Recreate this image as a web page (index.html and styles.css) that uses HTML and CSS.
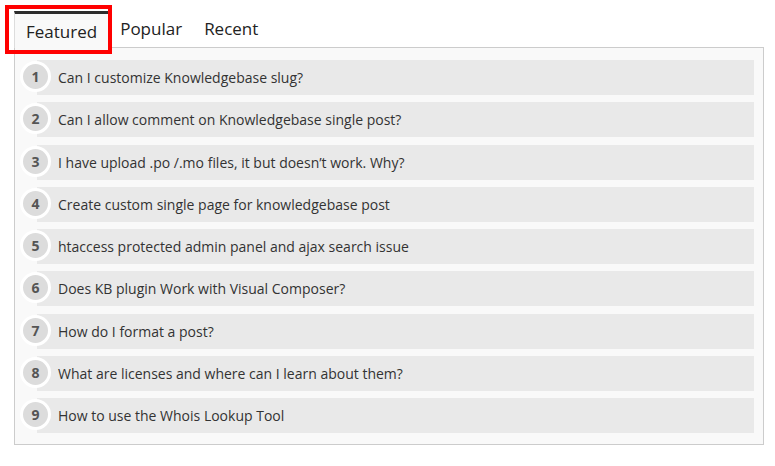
FILE: index.html
```html
<!DOCTYPE html>
<html>
<head>
<meta charset="utf-8">
<link rel="stylesheet" href="styles.css">
</head>
<body>
<div class="widget">
  <ul class="tabs">
    <li class="tab active">Featured</li>
    <li class="tab">Popular</li>
    <li class="tab">Recent</li>
  </ul>
  <div class="highlight"></div>
  <ol class="list">
    <li class="row"><span class="num">1</span>Can I customize Knowledgebase slug?</li>
    <li class="row"><span class="num">2</span>Can I allow comment on Knowledgebase single post?</li>
    <li class="row"><span class="num">3</span>I have upload .po /.mo files, it but doesn’t work. Why?</li>
    <li class="row"><span class="num">4</span>Create custom single page for knowledgebase post</li>
    <li class="row"><span class="num">5</span>htaccess protected admin panel and ajax search issue</li>
    <li class="row"><span class="num">6</span>Does KB plugin Work with Visual Composer?</li>
    <li class="row"><span class="num">7</span>How do I format a post?</li>
    <li class="row"><span class="num">8</span>What are licenses and where can I learn about them?</li>
    <li class="row"><span class="num">9</span>How to use the Whois Lookup Tool</li>
  </ol>
</div>
</body>
</html>
```
FILE: styles.css
```css
html, body {
  margin: 0;
  padding: 0;
  background: #fff;
}
body {
  font-family: "Open Sans", "Noto Sans", sans-serif;
  color: #333;
}
.widget {
  position: relative;
  padding: 11px 0 0 14px;
  width: 750px;
}
.tabs {
  display: flex;
  align-items: flex-start;
  list-style: none;
  margin: 0;
  padding: 0;
  position: relative;
  z-index: 1;
}
.tab {
  font-size: 17px;
  line-height: 22px;
  padding: 7px 11px 5px 11px;
  color: #222;
}
.tab.active {
  border-top: 3px solid #2d2d2d;
  border-left: 1px solid #ddd;
  border-right: 1px solid #ddd;
  background: #f9f9f9;
  padding: 7px 11px 5px 11px;
  margin-bottom: -1px;
}
.highlight {
  position: absolute;
  left: 5px;
  top: 5px;
  width: 107px;
  height: 49px;
  box-sizing: border-box;
  border: 4px solid #f00;
  z-index: 2;
}
.list {
  list-style: none;
  margin: 0;
  background: #f9f9f9;
  border: 1px solid #ccc;
  padding: 12px 9px 11px 22px;
  display: flex;
  flex-direction: column;
  gap: 7.25px;
}
.row {
  position: relative;
  height: 35px;
  line-height: 35px;
  background: #e9e9e9;
  font-size: 14px;
  color: #333;
  padding-left: 21px;
}
.num {
  position: absolute;
  left: -17px;
  top: 1px;
  width: 25px;
  height: 25px;
  border: 3px solid #fff;
  border-radius: 50%;
  background: #dcdcdc;
  color: #555;
  font-weight: 700;
  font-size: 14px;
  line-height: 25px;
  text-align: center;
}
```
